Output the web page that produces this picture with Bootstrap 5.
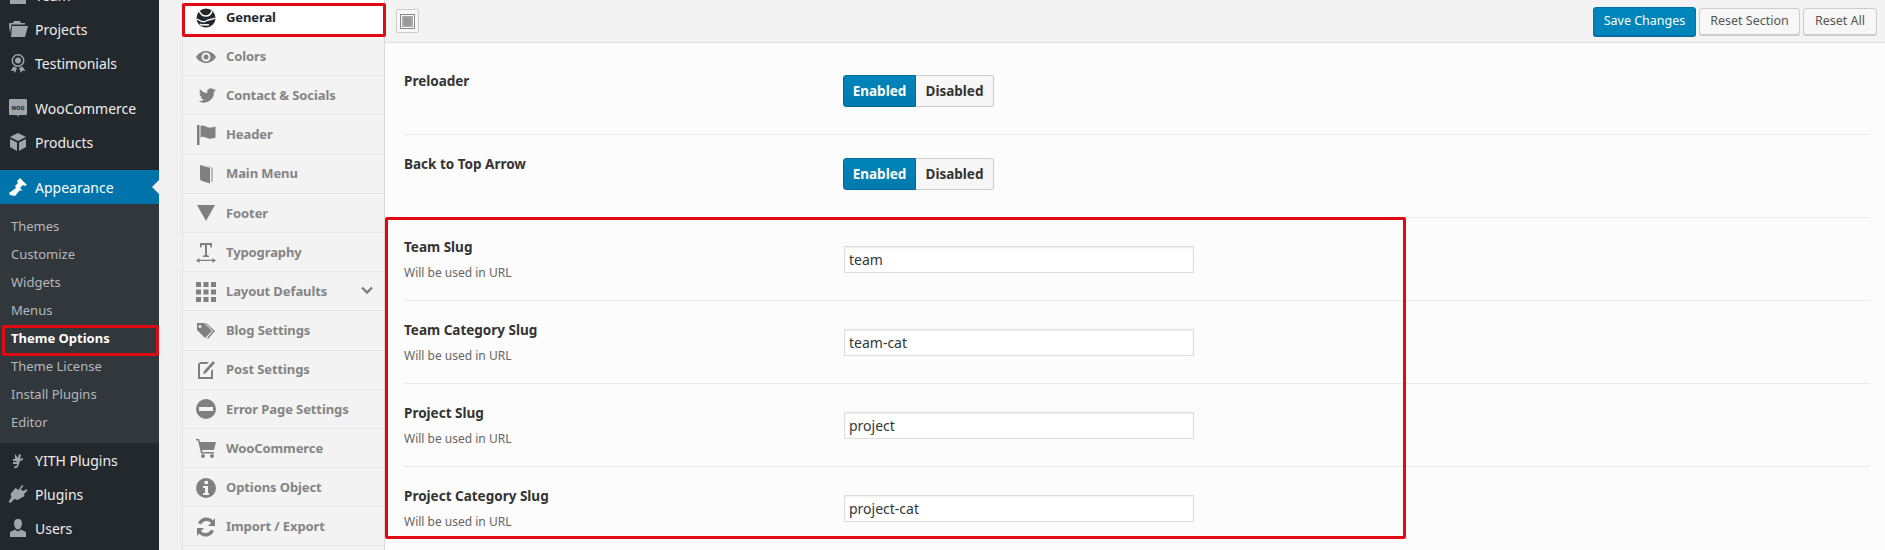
<!DOCTYPE html>
<html lang="en"><head><meta charset="utf-8"><title>Theme Options</title>
<link rel="stylesheet" href="https://cdn.jsdelivr.net/npm/bootstrap@5.3.0/dist/css/bootstrap.min.css">
<style>
html,body{height:550px;overflow:hidden}
body{background:#f1f1f1;font-family:"Noto Sans","Open Sans",sans-serif;font-size:13px;color:#444}
.wp-frame{height:550px;overflow:hidden}
.wp-side{width:159px;background:#23282d;flex:none;height:550px;overflow:hidden;color:#eee}
.side-list{margin-top:-22px}
.side-item{height:34px;padding-left:8px;font-size:14px;gap:7px;color:#eee;white-space:nowrap}
.side-item svg{width:20px;height:20px;fill:#a0a5aa;flex:none}
.side-gap{height:11px}
.side-item.cur{background:#0073aa;color:#fff;position:relative}
.side-item.cur svg{fill:#fff}
.cur-arrow{position:absolute;right:0;top:10px;border:7px solid transparent;border-right-color:#f1f1f1;border-left:0;height:0;width:0}
.side-sub{background:#32373c;padding:9px 0 6px}
.sub-row{height:28px;padding-left:11px;font-size:13px;color:#b4b9be;white-space:nowrap}
.sub-row.on{color:#fff;font-weight:700}
.red-mark{position:absolute;border:3px solid #df0a12;border-radius:2px;pointer-events:none}
.mark-a{left:2px;top:325px;width:157px;height:31px}
.mark-b{left:182px;top:3px;width:204px;height:34px}
.mark-c{left:385px;top:217px;width:1021px;height:322px}
.opts-nav{width:203px;margin-left:23px;flex:none;border-left:1px solid #e2e2e2;border-right:1px solid #d8d8d8;height:550px;overflow:hidden;background:#f3f3f3}
.opts-row{height:39.2px;padding:1px 0 0 13px;gap:10px;font-size:13px;font-weight:700;color:#848484;border-bottom:1px solid #e8e8e8;position:relative;white-space:nowrap;letter-spacing:-.1px}
.opts-row svg{width:20px;height:20px;fill:#808080;flex:none}
.opts-row.on{background:#fff;color:#23282d;height:37px;padding-top:0;padding-bottom:2px;border-bottom:0}
.opts-row.on svg{fill:#23282d}
.opts-row svg.chev{position:absolute;right:11px;top:14px;width:12px;height:9px;fill:none;stroke:#808080;stroke-width:2.4}
.opts-main{flex:1;background:#fcfcfc;height:550px;overflow:hidden}
.opts-head{height:43px;background:#f3f3f3;border-bottom:1px solid #dedede;padding:0 8px 0 11px}
.tool-box{width:23px;height:24px;border:1px solid #ccc;background:#f7f7f7;border-radius:2px}
.tool-box svg{width:15px;height:15px}
.wp-save,.wp-reset{font-size:12.5px;border-radius:3px;white-space:nowrap;padding:0}
.wp-save{width:103px;height:29px;background:#0085ba;border:1px solid #0073aa;color:#fff;box-shadow:0 1px 0 #006799}
.wp-reset{height:27px;background:#f7f7f7;border:1px solid #ccc;color:#555;box-shadow:0 1px 0 #ccc}
.wp-w1{width:101px}.wp-w2{width:74px}
.head-btns{gap:3px}
.field-stack{padding:9px 15px 0 19px}
.field-row{height:83px;border-bottom:1px solid #e9e9e9}
.field-row:last-child{border-bottom:0}
.field-left{width:440px;flex:none;padding-top:20px}
.field-name{font-size:13.5px;font-weight:700;color:#333;line-height:18px}
.field-note{font-size:12px;color:#666;line-height:18px;margin-top:8px}
.field-right{padding-top:23px}
.seg-group{margin-left:-1px}
.seg-on,.seg-off{height:32px;font-size:13.5px;font-weight:700;display:flex;align-items:center;justify-content:center;padding:0}
.seg-on{width:73px;background:linear-gradient(#0085ba,#0079ad);color:#fff;border:1px solid #006799;border-radius:3px 0 0 3px}
.seg-off{width:78px;background:#f7f7f7;color:#333;border:1px solid #ccc;border-left:0;border-radius:0 3px 3px 0}
.slug-input{width:350px;height:27px;border:1px solid #ddd;box-shadow:inset 0 1px 2px rgba(0,0,0,.07);background:#fff;font-size:14px;color:#32373c;padding:0 4px;margin-top:5px;border-radius:0;font-family:inherit;display:block}
.woo-word{font:700 6.500px "Liberation Sans",sans-serif;fill:#23282d}
</style></head>
<body>
<svg width="0" height="0" class="position-absolute"><defs>
<symbol id="i-folder" viewBox="0 0 20 20"><path d="M1 6l.5-2H5l1-2h6l1 2h4v1.500H3.500L2 14zm3 1h16l-3 11H3z"/></symbol>
<symbol id="i-award" viewBox="0 0 20 20"><path fill-rule="evenodd" d="M10 1a6.500 6.500 0 1 1 0 13 6.500 6.500 0 0 1 0-13zm0 1.500a5 5 0 1 0 0 10 5 5 0 0 0 0-10zM10 4.500a3 3 0 1 1 0 6 3 3 0 0 1 0-6zM5.500 13.500l-3 4.500 3-.5L7 20l2-5zm9 0 3 4.500-3-.5L13 20l-2-5z"/></symbol>
<symbol id="i-box" viewBox="0 0 20 20"><path d="M10 1l8 4-8 4-8-4zM2 7l7 3.500V19l-7-4zM18 7v8l-7 4v-8.500z"/></symbol>
<symbol id="i-brush" viewBox="0 0 20 20"><path d="M12 1l7 7-2 1-2-1-3 3 2 2-1 1-1-1-5 6-5-1-1-2 7-5-1-2 3-3-1-2z"/></symbol>
<symbol id="i-yith" viewBox="0 0 20 20"><path d="M7 4l3 4 1-4 2 1-1 4 3-1v2l-3 1-1 3c-.500 3-3 5-5 4l1-2c2 .500 2-1 2-2H5v-2h4l-1-1H5V9h2z"/></symbol>
<symbol id="i-plug" viewBox="0 0 20 20"><path d="M14 1l1.500 1-3 3.500 3 1.500 3-2 1 1.500-3.500 3.500.5 2-7 4-3-1-4 4-2-1 3-5-1-3 5-6 3 2z"/></symbol>
<symbol id="i-user" viewBox="0 0 20 20"><path d="M10 1c3 0 4 2 4 4.500 0 3-2 6-4 6s-4-3-4-6C6 3 7 1 10 1zM2 19v-4c0-2 3-2 5-3.500l3 2 3-2c2 1.500 5 1.500 5 3.500v4z"/></symbol>
<symbol id="i-eye" viewBox="0 0 20 20"><path fill-rule="evenodd" d="M10 4c4 0 8 2.500 10 6-2 3.500-6 6-10 6S2 13.500 0 10c2-3.500 6-6 10-6zm0 1.500a4.500 4.500 0 1 0 0 9 4.500 4.500 0 0 0 0-9zm0 2a2.500 2.500 0 1 1 0 5 2.500 2.500 0 0 1 0-5z"/></symbol>
<symbol id="i-bird" viewBox="0 0 20 20"><path d="M20 4c-.7.400-1.400.500-2 .6.700-.4 1.300-1.100 1.600-1.900-.7.400-1.400.700-2.200.9A3.500 3.500 0 0 0 11.400 7C8.500 6.800 5.900 5.400 4.100 3.200c-1 1.600-.5 3.700 1 4.700-.6 0-1.100-.2-1.600-.4 0 1.700 1.200 3.100 2.800 3.500-.5.100-1 .2-1.600.1.500 1.400 1.800 2.400 3.300 2.400A7 7 0 0 1 2.500 15a10 10 0 0 0 15.400-8.900c.8-.5 1.500-1.300 2.100-2.100z"/></symbol>
<symbol id="i-flag" viewBox="0 0 20 20"><path d="M1 0h2.500v20H1zM4.500 1c3-1.500 5 1 8 1.500 3 .300 5-.5 7-1v11c-2 1-4 1.500-7 1s-5-3-8-1z"/></symbol>
<symbol id="i-book" viewBox="0 0 20 20"><path d="M4 1l10 3v15.500L6 17c-1.500-.5-2-1.500-2-3zM6.500 .5l9 3 1 1v13l-1 .5V4z"/></symbol>
<symbol id="i-tri" viewBox="0 0 20 20"><path d="M1 2h18l-9 16z"/></symbol>
<symbol id="i-type" viewBox="0 0 20 20"><path d="M4 0h12v4.500h-1.300L14 2h-3v10l2 .7V14H7v-1.300l2-.7V2H6l-.7 2.500H4zM1 16.700h18v1.300H1zM3.500 15v5L0 17.500zm13 0 3.500 2.500-3.500 2.500z"/></symbol>
<symbol id="i-grid" viewBox="0 0 20 20"><path d="M0 0h5v5H0zm7.500 0h5v5h-5zM15 0h5v5h-5zM0 7.500h5v5H0zm7.500 0h5v5h-5zm7.500 0h5v5h-5zM0 15h5v5H0zm7.500 0h5v5h-5zm7.500 0h5v5h-5z"/></symbol>
<symbol id="i-tags" viewBox="0 0 20 20"><path fill-rule="evenodd" d="M1 2h7l8 8-7 7-8-8zm3 2a1.500 1.500 0 1 0 0 3 1.500 1.500 0 0 0 0-3zm6-2 9 8-7 8-1-1 6-7-8-8z"/></symbol>
<symbol id="i-edit" viewBox="0 0 20 20"><path d="M2 4l2-2h9l-2 2H4v13h11v-6l2-2v10H2zM17 1l2 2-9 10-3 1 1-3z"/></symbol>
<symbol id="i-stop" viewBox="0 0 20 20"><path fill-rule="evenodd" d="M10 0a10 10 0 1 1 0 20 10 10 0 0 1 0-20zM3 8v4h14V8z"/></symbol>
<symbol id="i-cart" viewBox="0 0 20 20"><path d="M0 1h3l1 3h16l-2 8H6l.5 2H18v1.500H5L2 2.500H0zM7 16a2 2 0 1 1 0 4 2 2 0 0 1 0-4zm9 0a2 2 0 1 1 0 4 2 2 0 0 1 0-4z"/></symbol>
<symbol id="i-info" viewBox="0 0 20 20"><path fill-rule="evenodd" d="M10 0a10 10 0 1 1 0 20 10 10 0 0 1 0-20zM8.500 3v3h3.500V3zM7 8v2h2v5H7v2h6v-2h-1V8z"/></symbol>
<symbol id="i-sync" viewBox="0 0 20 20"><path d="M19 1v8h-7l3-3a6 6 0 0 0-10 1.500L2 6a9 9 0 0 1 15-2.500zM1 19v-8h7l-3 3a6 6 0 0 0 10-1.500l3 1.500a9 9 0 0 1-15 2.500z"/></symbol>
</defs></svg>
<div class="wp-frame d-flex position-relative">
<aside class="wp-side">
<div class="side-list">
<div class="side-item d-flex align-items-center"><svg><use href="#i-user"/></svg><span>Team</span></div>
<div class="side-item d-flex align-items-center"><svg><use href="#i-folder"/></svg><span>Projects</span></div>
<div class="side-item d-flex align-items-center"><svg><use href="#i-award"/></svg><span>Testimonials</span></div>
<div class="side-gap"></div>
<div class="side-item d-flex align-items-center"><svg viewBox="0 0 20 20"><path d="M2 1h16a1 1 0 0 1 1 1v14a1 1 0 0 1-1 1h-7l-1 2-1-2H2a1 1 0 0 1-1-1V2a1 1 0 0 1 1-1z"/><text x="10" y="11.500" text-anchor="middle" class="woo-word">woo</text></svg><span>WooCommerce</span></div>
<div class="side-item d-flex align-items-center"><svg><use href="#i-box"/></svg><span>Products</span></div>
<div class="side-gap"></div>
<div class="side-item cur d-flex align-items-center"><svg><use href="#i-brush"/></svg><span>Appearance</span><i class="cur-arrow"></i></div>
<div class="side-sub">
<div class="sub-row d-flex align-items-center">Themes</div>
<div class="sub-row d-flex align-items-center">Customize</div>
<div class="sub-row d-flex align-items-center">Widgets</div>
<div class="sub-row d-flex align-items-center">Menus</div>
<div class="sub-row on d-flex align-items-center">Theme Options</div>
<div class="sub-row d-flex align-items-center">Theme License</div>
<div class="sub-row d-flex align-items-center">Install Plugins</div>
<div class="sub-row d-flex align-items-center">Editor</div>
</div>
<div class="side-item d-flex align-items-center"><svg><use href="#i-yith"/></svg><span>YITH Plugins</span></div>
<div class="side-item d-flex align-items-center"><svg><use href="#i-plug"/></svg><span>Plugins</span></div>
<div class="side-item d-flex align-items-center"><svg><use href="#i-user"/></svg><span>Users</span></div>
</div>
</aside>
<nav class="opts-nav">
<div class="opts-row on d-flex align-items-center"><svg viewBox="0 0 20 20"><circle cx="10" cy="10" r="9.500"/><path d="M3 3c2 3 3 5 7 5s5-2 6-5M1 11c3 2 6 4 9 2s6-1 9-3M4 16c2 2 6 0 9 1" fill="none" stroke="#fff" stroke-width="1.500"/></svg><span>General</span></div>
<div class="opts-row d-flex align-items-center"><svg><use href="#i-eye"/></svg><span>Colors</span></div>
<div class="opts-row d-flex align-items-center"><svg><use href="#i-bird"/></svg><span>Contact &amp; Socials</span></div>
<div class="opts-row d-flex align-items-center"><svg><use href="#i-flag"/></svg><span>Header</span></div>
<div class="opts-row d-flex align-items-center"><svg><use href="#i-book"/></svg><span>Main Menu</span></div>
<div class="opts-row d-flex align-items-center"><svg><use href="#i-tri"/></svg><span>Footer</span></div>
<div class="opts-row d-flex align-items-center"><svg><use href="#i-type"/></svg><span>Typography</span></div>
<div class="opts-row d-flex align-items-center"><svg><use href="#i-grid"/></svg><span>Layout Defaults</span><svg class="chev" viewBox="0 0 12 9"><path d="M1 1.500l5 5 5-5"/></svg></div>
<div class="opts-row d-flex align-items-center"><svg><use href="#i-tags"/></svg><span>Blog Settings</span></div>
<div class="opts-row d-flex align-items-center"><svg><use href="#i-edit"/></svg><span>Post Settings</span></div>
<div class="opts-row d-flex align-items-center"><svg><use href="#i-stop"/></svg><span>Error Page Settings</span></div>
<div class="opts-row d-flex align-items-center"><svg><use href="#i-cart"/></svg><span>WooCommerce</span></div>
<div class="opts-row d-flex align-items-center"><svg><use href="#i-info"/></svg><span>Options Object</span></div>
<div class="opts-row d-flex align-items-center"><svg><use href="#i-sync"/></svg><span>Import / Export</span></div>
</nav>
<main class="opts-main">
<div class="opts-head d-flex align-items-center justify-content-between">
<div class="tool-box d-flex align-items-center justify-content-center"><svg viewBox="0 0 15 15"><rect x=".5" y=".5" width="14" height="14" fill="none" stroke="#888"/><rect x="2" y="2" width="11" height="11" fill="#aaa"/><rect x="4" y="3" width="7" height="9" fill="#999"/></svg></div>
<div class="head-btns d-flex align-items-center">
<button class="btn wp-save" type="button">Save Changes</button>
<button class="btn wp-reset wp-w1" type="button">Reset Section</button>
<button class="btn wp-reset wp-w2" type="button">Reset All</button>
</div>
</div>
<div class="field-stack">
<div class="field-row d-flex"><div class="field-left"><div class="field-name">Preloader</div></div><div class="field-right seg-group d-flex align-items-start"><div class="seg-on">Enabled</div><div class="seg-off">Disabled</div></div></div>
<div class="field-row d-flex"><div class="field-left"><div class="field-name">Back to Top Arrow</div></div><div class="field-right seg-group d-flex align-items-start"><div class="seg-on">Enabled</div><div class="seg-off">Disabled</div></div></div>
<div class="field-row d-flex"><div class="field-left"><div class="field-name">Team Slug</div><div class="field-note">Will be used in URL</div></div><div class="field-right"><input class="slug-input" value="team"></div></div>
<div class="field-row d-flex"><div class="field-left"><div class="field-name">Team Category Slug</div><div class="field-note">Will be used in URL</div></div><div class="field-right"><input class="slug-input" value="team-cat"></div></div>
<div class="field-row d-flex"><div class="field-left"><div class="field-name">Project Slug</div><div class="field-note">Will be used in URL</div></div><div class="field-right"><input class="slug-input" value="project"></div></div>
<div class="field-row d-flex"><div class="field-left"><div class="field-name">Project Category Slug</div><div class="field-note">Will be used in URL</div></div><div class="field-right"><input class="slug-input" value="project-cat"></div></div>
</div>
</main>
<div class="red-mark mark-a"></div><div class="red-mark mark-b"></div><div class="red-mark mark-c"></div>
</div>
<script src="https://cdn.jsdelivr.net/npm/bootstrap@5.3.0/dist/js/bootstrap.bundle.min.js"></script>
</body></html>
